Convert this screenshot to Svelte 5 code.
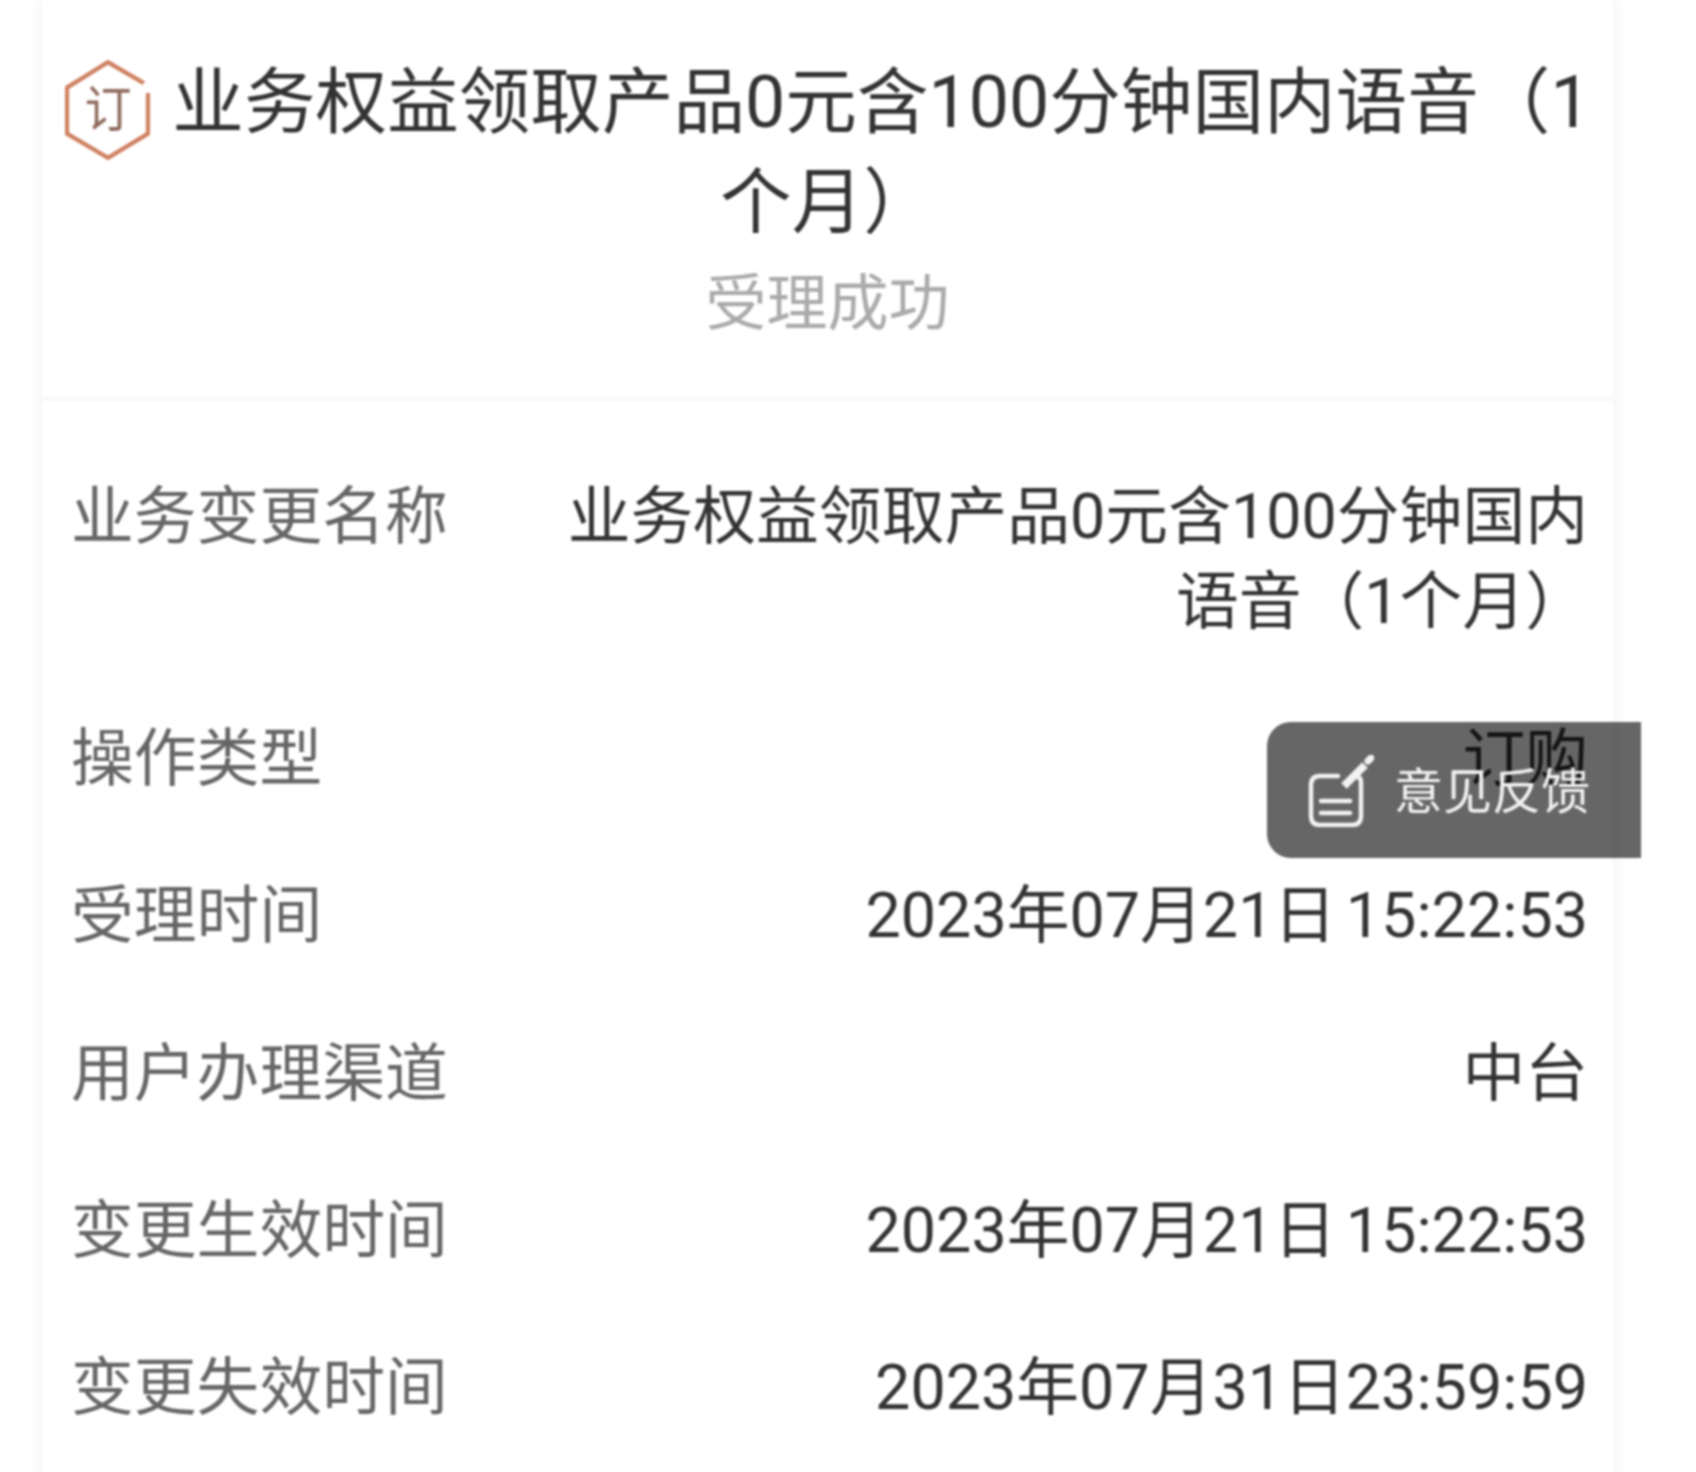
<script>
  const rows = [
    { label: '业务变更名称', value: '业务权益领取产品0元含100分钟国内语音（1个月）' },
    { label: '操作类型', value: '订购' },
    { label: '受理时间', value: '2023年07月21日 15:22:53' },
    { label: '用户办理渠道', value: '中台' },
    { label: '变更生效时间', value: '2023年07月21日 15:22:53' },
    { label: '变更失效时间', value: '2023年07月31日23:59:59' }
  ];
</script>

<div class="page">
  <div class="card">
    <header class="head">
      <h1 class="title">
        <svg class="badge" viewBox="0 0 85 91" preserveAspectRatio="none" aria-hidden="true">
          <path class="hex" d="M82 30 V67 L43 89 L3 67 V25 L43 2 L78 21" />
          <text class="hex-text" x="43" y="61">订</text>
        </svg>业务权益领取产品0元含100分钟国内语音（1个月）
      </h1>
      <div class="status">受理成功</div>
    </header>
    <div class="rows">
      {#each rows as row}
        <div class="row">
          <div class="label">{row.label}</div>
          <div class="value">{row.value}</div>
        </div>
      {/each}
    </div>
  </div>
  <div class="feedback">
    <svg class="fb-icon" viewBox="0 0 66 72" aria-hidden="true">
      <path d="M30 21 H12 Q3 21 3 30 V61 Q3 70 12 70 H44 Q53 70 53 61 V27 Q53 23 50 22" />
      <path d="M13 46 H42 M13 58 H42" />
      <path class="pen" d="M36 31 L57 10" />
      <path class="tip" d="M60 6 L63 3" />
    </svg>
    <span class="fb-text">意见反馈</span>
  </div>
</div>

<style>
  :global(body) {
    margin: 0;
    background: #fff;
  }
  .page {
    position: relative;
    height: 1472px;
    overflow: hidden;
    padding: 0 83px 0 42px;
    box-sizing: border-box;
    font-family: Roboto, "Noto Sans CJK SC", "Noto Sans", sans-serif;
    filter: blur(0.8px);
  }
  .card {
    min-height: 1500px;
    background: #fff;
    box-shadow: 0 0 16px rgba(0, 0, 0, 0.07);
  }
  .head {
    padding: 53px 0 50px;
    border-bottom: 4px solid #f8f8f8;
    text-align: center;
  }
  .title {
    margin: 0;
    font-size: 71.6px;
    font-weight: 400;
    line-height: 100px;
    color: #333;
  }
  .badge {
    width: 87px;
    height: 100px;
    margin: -10px 21px -10px 0;
    vertical-align: -23px;
  }
  .hex {
    fill: none;
    stroke: #cf8060;
    stroke-width: 4;
  }
  .hex-text {
    fill: #8f6a5c;
    font-size: 46px;
    font-weight: 400;
    text-anchor: middle;
  }
  .status {
    margin-top: 8px;
    font-size: 61px;
    line-height: 86px;
    color: #aaa;
  }
  .rows {
    display: flex;
    flex-direction: column;
    gap: 72.4px;
    padding: 72.5px 25px 0 29px;
  }
  .row {
    display: flex;
    justify-content: space-between;
    gap: 40px;
    font-size: 62.8px;
    font-weight: 400;
    line-height: 85px;
    word-spacing: -6px;
  }
  .label {
    flex: none;
    color: #666;
  }
  .value {
    max-width: 1030px;
    text-align: right;
    color: #333;
  }
  .feedback {
    position: absolute;
    top: 722px;
    right: 55px;
    display: flex;
    align-items: center;
    gap: 20px;
    width: 374px;
    height: 136px;
    box-sizing: border-box;
    padding-left: 41px;
    border-radius: 24px 0 0 24px;
    background: rgba(0, 0, 0, 0.6);
    color: #f2f2f2;
    font-size: 49px;
    font-weight: 400;
  }
  .fb-text {
    margin-top: -6px;
  }
  .fb-icon {
    width: 66px;
    height: 72px;
    margin-top: 2px;
    fill: none;
    stroke: #f2f2f2;
    stroke-width: 4.5;
    stroke-linecap: round;
  }
  .pen {
    stroke-width: 8;
    stroke-linecap: butt;
  }
  .tip {
    stroke-width: 7;
  }
</style>
